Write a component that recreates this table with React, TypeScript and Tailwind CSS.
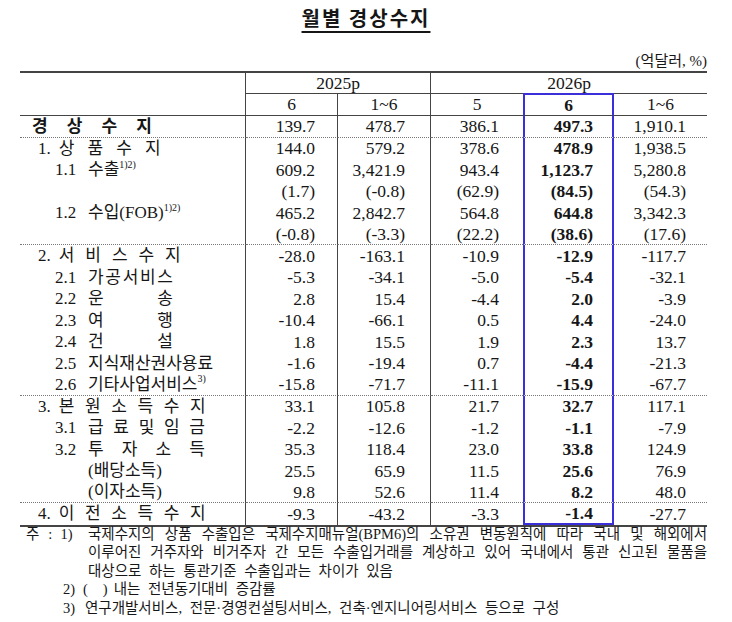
import type { ReactNode } from 'react';

const BLUE = 'border-[#3a2fd8]';

function Spread({ chars, className }: { chars: string[]; className: string }) {
  return (
    <span className={`inline-flex justify-between ${className}`}>
      {chars.map((c, i) => (
        <span key={i}>{c}</span>
      ))}
    </span>
  );
}

type RowData = { label: ReactNode; v: string[]; sep?: boolean; last?: boolean };

const rows: RowData[] = [
  {
    label: (
      <span className="pl-[12px] font-bold">
        <Spread chars={['경', '상', '수', '지']} className="w-[120px]" />
      </span>
    ),
    v: ['139.7', '478.7', '386.1', '497.3', '1,910.1'],
    sep: true,
  },
  {
    label: (
      <span className="pl-[18px] flex items-center">
        1.<Spread chars={['상', '품', '수', '지']} className="ml-[8px] w-[102px]" />
      </span>
    ),
    v: ['144.0', '579.2', '378.6', '478.9', '1,938.5'],
  },
  {
    label: (
      <span className="pl-[35px] flex items-center">
        <span className="w-[33px]">1.1</span>수출<sup className="text-[10px] -top-[5px]">1)2)</sup>
      </span>
    ),
    v: ['609.2', '3,421.9', '943.4', '1,123.7', '5,280.8'],
  },
  { label: null, v: ['(1.7)', '(-0.8)', '(62.9)', '(84.5)', '(54.3)'] },
  {
    label: (
      <span className="pl-[35px] flex items-center">
        <span className="w-[33px]">1.2</span>수입(FOB)<sup className="text-[10px] -top-[5px]">1)2)</sup>
      </span>
    ),
    v: ['465.2', '2,842.7', '564.8', '644.8', '3,342.3'],
  },
  { label: null, v: ['(-0.8)', '(-3.3)', '(22.2)', '(38.6)', '(17.6)'], sep: true },
  {
    label: (
      <span className="pl-[18px] flex items-center">
        2.<Spread chars={['서', '비', '스', '수', '지']} className="ml-[8px] w-[122px]" />
      </span>
    ),
    v: ['-28.0', '-163.1', '-10.9', '-12.9', '-117.7'],
  },
  {
    label: (
      <span className="pl-[35px] flex items-center">
        <span className="w-[33px]">2.1</span>
        <Spread chars={['가', '공', '서', '비', '스']} className="w-[85px]" />
      </span>
    ),
    v: ['-5.3', '-34.1', '-5.0', '-5.4', '-32.1'],
  },
  {
    label: (
      <span className="pl-[35px] flex items-center">
        <span className="w-[33px]">2.2</span>
        <Spread chars={['운', '송']} className="w-[85px]" />
      </span>
    ),
    v: ['2.8', '15.4', '-4.4', '2.0', '-3.9'],
  },
  {
    label: (
      <span className="pl-[35px] flex items-center">
        <span className="w-[33px]">2.3</span>
        <Spread chars={['여', '행']} className="w-[85px]" />
      </span>
    ),
    v: ['-10.4', '-66.1', '0.5', '4.4', '-24.0'],
  },
  {
    label: (
      <span className="pl-[35px] flex items-center">
        <span className="w-[33px]">2.4</span>
        <Spread chars={['건', '설']} className="w-[85px]" />
      </span>
    ),
    v: ['1.8', '15.5', '1.9', '2.3', '13.7'],
  },
  {
    label: (
      <span className="pl-[35px] flex items-center">
        <span className="w-[33px]">2.5</span>지식재산권사용료
      </span>
    ),
    v: ['-1.6', '-19.4', '0.7', '-4.4', '-21.3'],
  },
  {
    label: (
      <span className="pl-[35px] flex items-center">
        <span className="w-[33px]">2.6</span>기타사업서비스<sup className="text-[10px] -top-[5px]">3)</sup>
      </span>
    ),
    v: ['-15.8', '-71.7', '-11.1', '-15.9', '-67.7'],
    sep: true,
  },
  {
    label: (
      <span className="pl-[18px] flex items-center">
        3.<Spread chars={['본', '원', '소', '득', '수', '지']} className="ml-[8px] w-[147px]" />
      </span>
    ),
    v: ['33.1', '105.8', '21.7', '32.7', '117.1'],
  },
  {
    label: (
      <span className="pl-[35px] flex items-center">
        <span className="w-[33px]">3.1</span>
        <Spread chars={['급', '료', '및', '임', '금']} className="w-[117px]" />
      </span>
    ),
    v: ['-2.2', '-12.6', '-1.2', '-1.1', '-7.9'],
  },
  {
    label: (
      <span className="pl-[35px] flex items-center">
        <span className="w-[33px]">3.2</span>
        <Spread chars={['투', '자', '소', '득']} className="w-[117px]" />
      </span>
    ),
    v: ['35.3', '118.4', '23.0', '33.8', '124.9'],
  },
  { label: <span className="pl-[68px]">(배당소득)</span>, v: ['25.5', '65.9', '11.5', '25.6', '76.9'] },
  { label: <span className="pl-[68px]">(이자소득)</span>, v: ['9.8', '52.6', '11.4', '8.2', '48.0'], sep: true },
  {
    label: (
      <span className="pl-[18px] flex items-center">
        4.<Spread chars={['이', '전', '소', '득', '수', '지']} className="ml-[8px] w-[147px]" />
      </span>
    ),
    v: ['-9.3', '-43.2', '-3.3', '-1.4', '-27.7'],
    last: true,
  },
];

function Row({ label, v, sep, last }: RowData) {
  const b = sep ? 'border-b [border-bottom-style:dotted] border-b-[#777]' : '';
  return (
    <div className="flex h-[21.5px]">
      <div className={`w-[226px] flex items-center text-[17px] border-r border-r-[#444] ${b}`}>{label}</div>
      <div className={`w-[92px] flex items-center justify-end pr-[22px] border-r border-r-[#444] ${b}`}>{v[0]}</div>
      <div className={`w-[93px] flex items-center justify-end pr-[25px] border-r border-r-[#444] ${b}`}>{v[1]}</div>
      <div className={`w-[92px] flex items-center justify-end pr-[24px] ${b}`}>{v[2]}</div>
      <div
        className={`w-[91px] flex items-center justify-end pr-[19px] font-bold border-x-2 ${BLUE} ${b} ${
          last ? 'border-b-2 border-b-[#3a2fd8]' : ''
        }`}
      >
        {v[3]}
      </div>
      <div className={`w-[93px] flex items-center justify-end pr-[21px] ${b}`}>{v[4]}</div>
    </div>
  );
}

export default function App() {
  return (
    <div className="w-[732px] h-[622px] overflow-hidden bg-white text-[#161616] font-['Liberation_Serif','Noto_Sans_CJK_KR',serif]">
      <div className="pt-[6px] text-center leading-[24px]">
        <span className="font-['Noto_Sans_CJK_KR',sans-serif] font-bold text-[20px] tracking-[2px] underline decoration-[1.5px] underline-offset-[5px]">
          월별 경상수지
        </span>
      </div>
      <div className="mt-[19px] pr-[25px] text-right text-[15px] leading-[18px]">(억달러, %)</div>

      <div className="ml-[20px] mt-[1px] w-[687px] text-[17.5px] border-t-2 border-t-[#444]">
        <div className="flex">
          <div className="w-[226px] h-[43px] border-r border-b border-[#444]" />
          <div className="flex flex-col">
            <div className="flex h-[20px] items-center">
              <div className="w-[185px] h-full flex items-center justify-center border-r border-r-[#444]">2025p</div>
              <div className="w-[276px] text-center">2026p</div>
            </div>
            <div className="flex h-[23px]">
              <div className="w-[92px] flex items-center justify-center border-y border-r border-[#444]">6</div>
              <div className="w-[93px] flex items-center justify-center border-y border-r border-[#444]">1~6</div>
              <div className="w-[92px] flex items-center justify-center border-y border-[#444]">5</div>
              <div className="w-[91px] flex items-center justify-center font-bold border-t-2 border-x-2 border-[#3a2fd8] border-b border-b-[#444]">
                6
              </div>
              <div className="w-[93px] flex items-center justify-center border-y border-[#444]">1~6</div>
            </div>
          </div>
        </div>
        {rows.map((r, i) => (
          <Row key={i} {...r} />
        ))}
        <div className="border-t-2 border-t-[#444]" />
      </div>

      <div className="-mt-[2px] text-[14.5px] leading-[18.5px] [word-spacing:4px]">
        <div className="flex">
          <span className="w-[88px] shrink-0 flex">
            <span className="ml-[26px]">주</span>
            <span className="ml-[9px]">:</span>
            <span className="ml-[8px]">1)</span>
          </span>
          <span className="w-[619px] text-justify [text-align-last:justify] [word-spacing:0px]">
            국제수지의 상품 수출입은 국제수지매뉴얼(BPM6)의 소유권 변동원칙에 따라 국내 및 해외에서
          </span>
        </div>
        <div className="pl-[88px] w-[707px] text-justify [text-align-last:justify] [word-spacing:0px]">
          이루어진 거주자와 비거주자 간 모든 수출입거래를 계상하고 있어 국내에서 통관 신고된 물품을
        </div>
        <div className="pl-[88px]">대상으로 하는 통관기준 수출입과는 차이가 있음</div>
        <div className="flex pl-[63px]">
          <span className="w-[20px]">2)</span>
          <span>(</span>
          <span className="ml-[15px]">)</span>
          <span className="ml-[6px]">내는 전년동기대비 증감률</span>
        </div>
        <div className="flex pl-[63px]">
          <span className="w-[22px]">3)</span>
          <span>연구개발서비스, 전문·경영컨설팅서비스, 건축·엔지니어링서비스 등으로 구성</span>
        </div>
      </div>
    </div>
  );
}
